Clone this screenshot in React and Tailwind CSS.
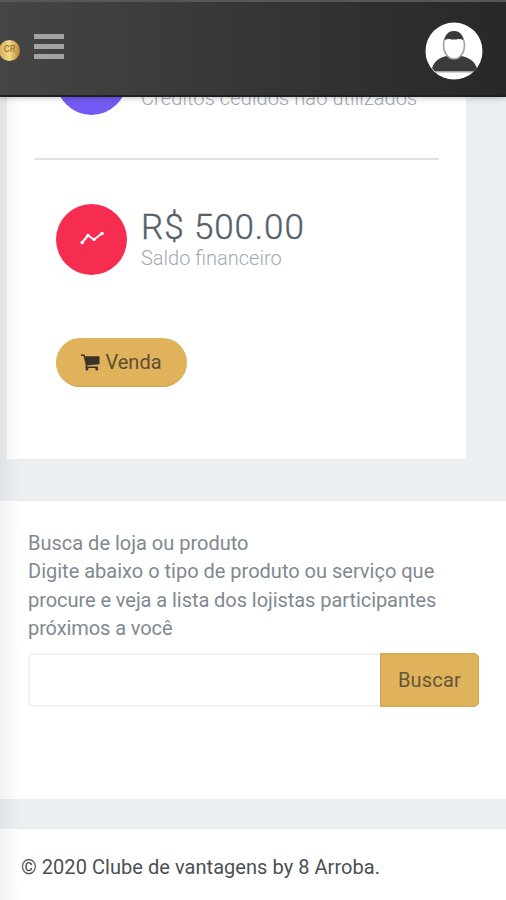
import React from 'react';

function Navbar() {
  return (
    <header className="relative z-10 h-[97px] shrink-0 flex items-center justify-between border-t-2 border-t-[#575757] border-b-2 border-b-[#202020] bg-linear-to-r from-[#454545] to-[#282828] pr-[23px] shadow-[0_1px_6px_rgba(0,0,0,0.25)]">
      <div className="flex items-center">
        <span className="mt-[3px] -ml-px flex h-[21px] w-[21px] items-center justify-center rounded-full bg-linear-to-r from-[#d3ae5c] via-[#f3da86] to-[#b98632] text-[9px] text-[#8a6a2c]">
          CR
        </span>
        <button className="ml-[14px] -mt-[5px] flex flex-col gap-[5px]" aria-label="Menu">
          <span className="h-[5px] w-[30px] bg-[#a2a2a2]" />
          <span className="h-[5px] w-[30px] bg-[#a2a2a2]" />
          <span className="h-[5px] w-[30px] bg-[#a2a2a2]" />
        </button>
      </div>
      <svg className="mt-[5px] h-[58px] w-[58px]" viewBox="0 0 58 58">
        <circle cx="29" cy="29" r="28.5" fill="#fff" />
        <path d="M7 46C10 38 16 34.5 23 34l6 3 6-3c7 .5 14 4 17 12l-3 3.500H10z" fill="#3b3b3b" />
        <ellipse cx="29" cy="23.500" rx="10.500" ry="13.500" fill="#fff" stroke="#a3a3a3" strokeWidth="1.600" />
        <path d="M19.500 18c1-6 4.500-9 9.500-9s8.500 3 9.500 9c-2-.8-3.500-1.200-5-1-3 .8-6 .8-9 0-1.500-.2-3 .2-5 1z" fill="#3b3b3b" />
        <path d="M10 50h38" stroke="#aaa" strokeWidth="1" />
      </svg>
    </header>
  );
}

function CartIcon() {
  return (
    <svg className="h-[18px] w-[19px]" viewBox="0 0 19 18" fill="#3a3226">
      <path d="M0 1.500h3.600l.6 1.700H18.500v8L6.200 12.500l-.2 1H17v1.500H4.300l.5-2.600L2.600 3H0z" />
      <circle cx="6" cy="16" r="1.500" />
      <circle cx="15.800" cy="16" r="1.500" />
    </svg>
  );
}

function BalanceCard() {
  return (
    <section className="ml-[7px] h-[362px] w-[459px] shrink-0 overflow-hidden bg-white px-[28px]">
      <div className="-mt-[53px] flex h-[71px] pl-[21px]">
        <div className="h-[71px] w-[71px] rounded-full bg-[#745af2]" />
        <p className="mt-[42px] ml-[14px] text-[20px] leading-[24px] font-light tracking-[0.1px] whitespace-nowrap text-[#a1aab2]">
          Créditos cedidos não utilizados
        </p>
      </div>

      <hr className="mt-[43px] w-[404px] border-t-2 border-[#e0e2e4]" />

      <div className="mt-[44px] flex pl-[21px]">
        <div className="flex h-[71px] w-[71px] items-center justify-center rounded-full bg-[#f62d51]">
          <svg className="-mt-[3px] h-[16px] w-[24px]" viewBox="0 0 24 16" fill="none" stroke="#fff" strokeWidth="2" strokeLinecap="round" strokeLinejoin="round">
            <path d="M2 12.500L8 5.500l6 4L22 3.500" />
            <g fill="#fff" stroke="none">
              <circle cx="2.200" cy="12.500" r="1.800" />
              <circle cx="8" cy="5.500" r="1.800" />
              <circle cx="14" cy="9.500" r="1.600" />
              <circle cx="22" cy="3.500" r="1.800" />
            </g>
          </svg>
        </div>
        <div className="ml-[14px] whitespace-nowrap">
          <h3 className="mt-[4px] text-[35px] leading-[40px] font-light tracking-[0.9px] text-[#54606c] [-webkit-text-stroke:0.35px_#54606c]">R$ 500.00</h3>
          <p className="-mt-[2px] text-[20px] leading-[24px] font-light text-[#a1aab2]">Saldo financeiro</p>
        </div>
      </div>

      <button className="mt-[63px] ml-[21px] flex h-[49px] w-[131px] items-center justify-center gap-[5px] rounded-full border-b border-[#cf9f48] bg-[#e0b25c] text-[20px] text-[#5e4f33]">
        <CartIcon />
        <span>Venda</span>
      </button>
    </section>
  );
}

function SearchBox() {
  return (
    <section className="mt-[42px] h-[298px] shrink-0 bg-white px-[28px] pt-[28px]">
      <p className="text-[20px] leading-[28.400px] whitespace-nowrap text-[#808990]">
        <span className="block">Busca de loja ou produto</span>
        <span className="block">Digite abaixo o tipo de produto ou serviço que</span>
        <span className="block tracking-[-0.06px]">procure e veja a lista dos lojistas participantes</span>
        <span className="block tracking-[-0.1px]">próximos a você</span>
      </p>
      <div className="mt-[10px] flex h-[54px] w-[451px]">
        <input type="text" aria-label="Busca" className="min-w-0 flex-1 rounded-l-[5px] border-2 border-r-0 border-[#eff1f2] bg-white px-3" />
        <button className="w-[99px] rounded-r-[5px] border border-[#d4a44f] bg-[#e0b25c] text-[20px] tracking-[0.2px] text-[#665637]">
          Buscar
        </button>
      </div>
    </section>
  );
}

export default function App() {
  return (
    <div className="relative flex h-[900px] w-[506px] flex-col overflow-hidden bg-[#ebeff2] font-[Roboto,sans-serif]">
      <Navbar />
      <BalanceCard />
      <SearchBox />
      <footer className="mt-[30px] flex-1 bg-white pt-[24px] pl-[21px] text-[20px] leading-[28px] tracking-[0.05px] whitespace-nowrap text-[#4b5052]">
        © 2020 Clube de vantagens by 8 Arroba.
      </footer>
      {/* shadow of the collapsed sidebar */}
      <div className="pointer-events-none absolute top-[97px] bottom-0 left-0 w-[20px] bg-linear-to-r from-black/5 to-transparent" />
    </div>
  );
}
